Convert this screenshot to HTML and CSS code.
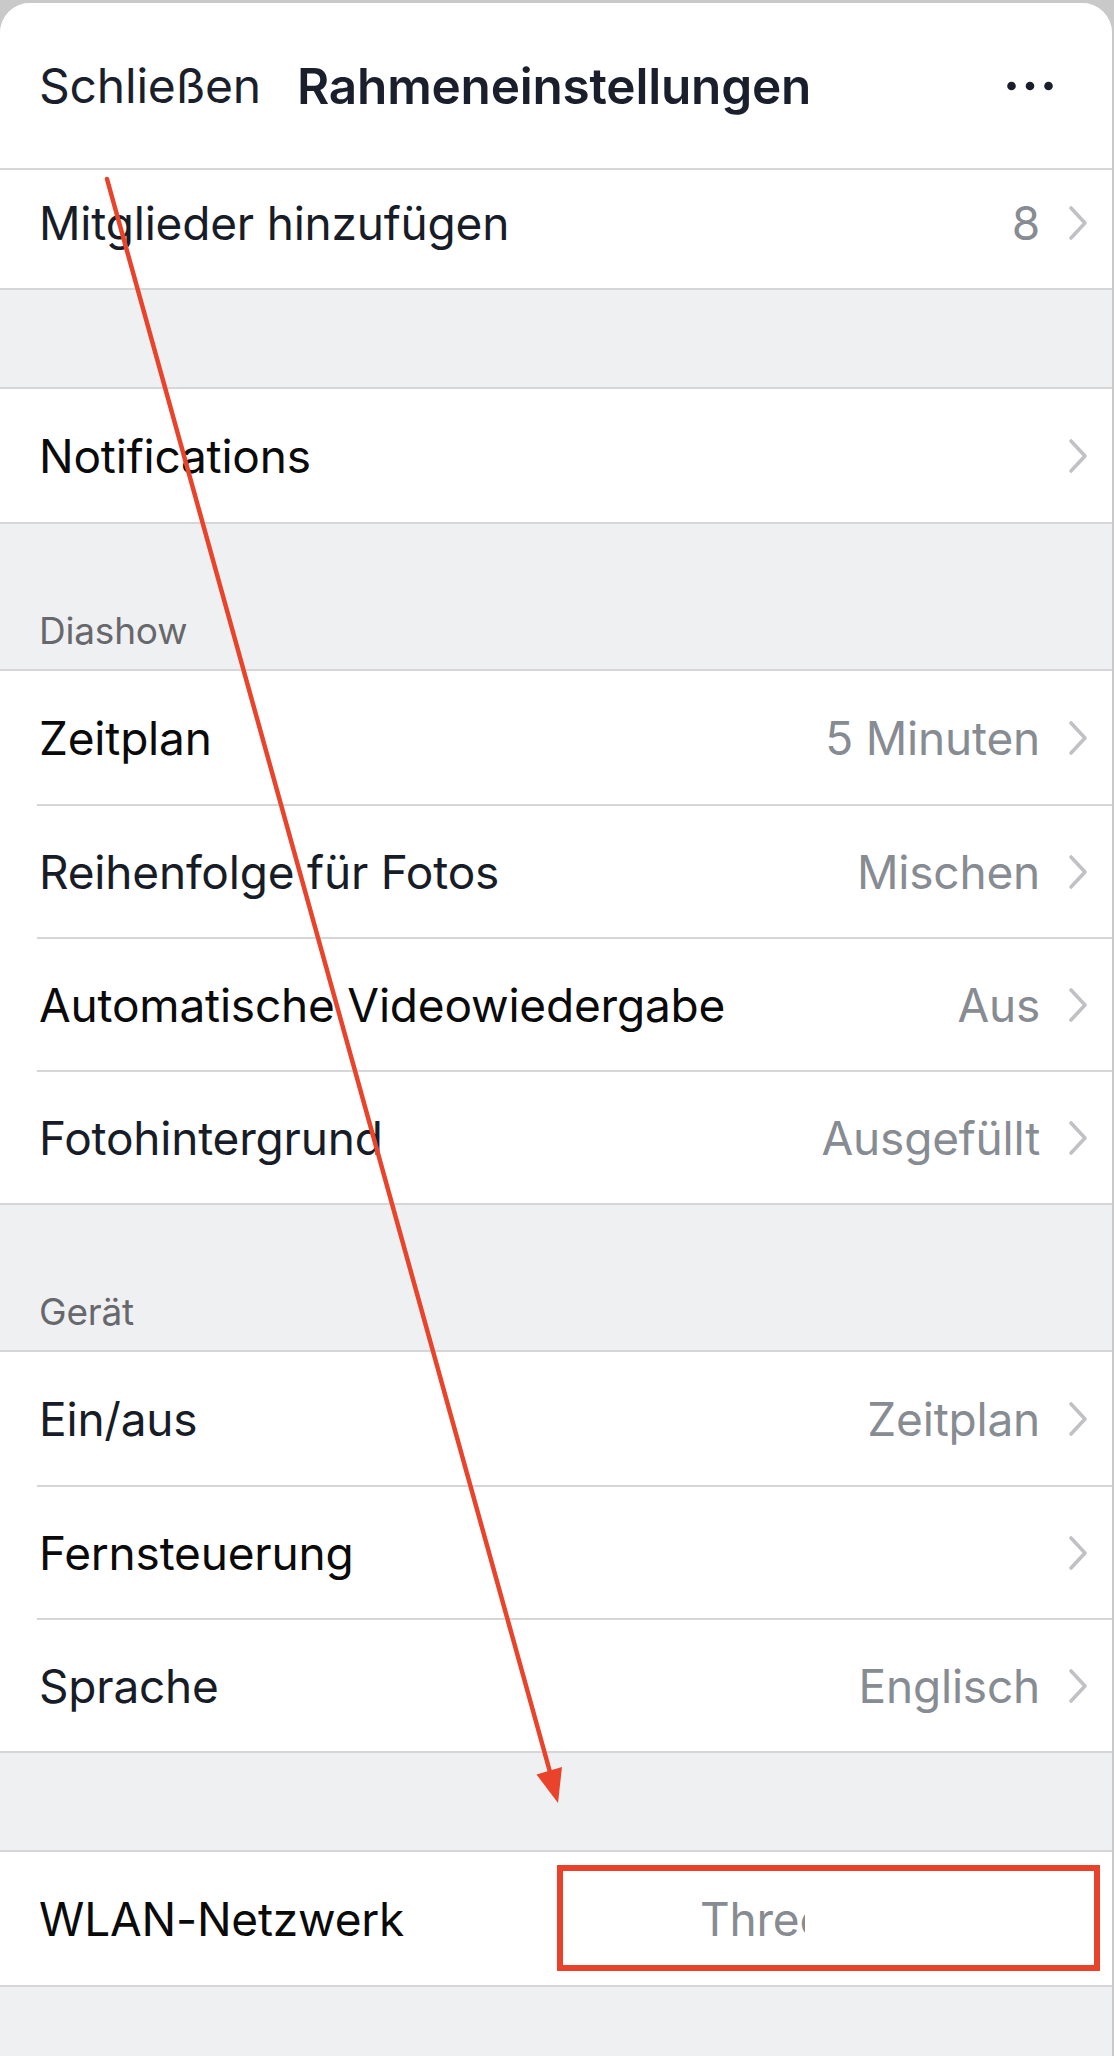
FILE: index.html
```html
<!DOCTYPE html>
<html lang="de">
<head>
<meta charset="utf-8">
<title>Rahmeneinstellungen</title>
<link rel="stylesheet" href="styles.css">
</head>
<body>
<div class="screen">
  <div class="sheet">
    <header class="navbar">
      <span class="nav-close">Schließen</span>
      <span class="nav-title">Rahmeneinstellungen</span>
      <span class="nav-more">
        <svg width="46" height="10" viewBox="0 0 46 10"><circle cx="4.5" cy="5" r="4.3"/><circle cx="23" cy="5" r="4.3"/><circle cx="41.5" cy="5" r="4.3"/></svg>
      </span>
    </header>

    <div class="group group-first">
      <div class="cell cell-cut">
        <span class="label">Mitglieder hinzufügen</span>
        <span class="value">8</span>
        <svg class="chev" width="20" height="36" viewBox="0 0 20 36"><path d="M3 3 L17 18 L3 33"/></svg>
      </div>
    </div>

    <div class="gap"></div>

    <div class="group">
      <div class="cell">
        <span class="label black">Notifications</span>
        <svg class="chev" width="20" height="36" viewBox="0 0 20 36"><path d="M3 3 L17 18 L3 33"/></svg>
      </div>
    </div>

    <div class="gap gap-title"><span>Diashow</span></div>

    <div class="group">
      <div class="cell">
        <span class="label black">Zeitplan</span>
        <span class="value">5 Minuten</span>
        <svg class="chev" width="20" height="36" viewBox="0 0 20 36"><path d="M3 3 L17 18 L3 33"/></svg>
      </div>
      <div class="cell">
        <span class="label">Reihenfolge für Fotos</span>
        <span class="value">Mischen</span>
        <svg class="chev" width="20" height="36" viewBox="0 0 20 36"><path d="M3 3 L17 18 L3 33"/></svg>
      </div>
      <div class="cell">
        <span class="label black">Automatische Videowiedergabe</span>
        <span class="value">Aus</span>
        <svg class="chev" width="20" height="36" viewBox="0 0 20 36"><path d="M3 3 L17 18 L3 33"/></svg>
      </div>
      <div class="cell">
        <span class="label">Fotohintergrund</span>
        <span class="value">Ausgefüllt</span>
        <svg class="chev" width="20" height="36" viewBox="0 0 20 36"><path d="M3 3 L17 18 L3 33"/></svg>
      </div>
    </div>

    <div class="gap gap-title"><span>Gerät</span></div>

    <div class="group">
      <div class="cell">
        <span class="label">Ein/aus</span>
        <span class="value">Zeitplan</span>
        <svg class="chev" width="20" height="36" viewBox="0 0 20 36"><path d="M3 3 L17 18 L3 33"/></svg>
      </div>
      <div class="cell">
        <span class="label black">Fernsteuerung</span>
        <svg class="chev" width="20" height="36" viewBox="0 0 20 36"><path d="M3 3 L17 18 L3 33"/></svg>
      </div>
      <div class="cell">
        <span class="label">Sprache</span>
        <span class="value">Englisch</span>
        <svg class="chev" width="20" height="36" viewBox="0 0 20 36"><path d="M3 3 L17 18 L3 33"/></svg>
      </div>
    </div>

    <div class="gap"></div>

    <div class="group">
      <div class="cell">
        <span class="label black">WLAN-Netzwerk</span>
        <span class="value value-clip">Three</span>
      </div>
    </div>

    <div class="gap-bottom"></div>
  </div>

  <svg class="annot-arrow" width="1114" height="2056" viewBox="0 0 1114 2056">
    <line x1="107" y1="179" x2="550" y2="1772" stroke="#e9442b" stroke-width="4.5" stroke-linecap="round"/>
    <polygon points="558,1803 562,1767 536.5,1774.5" fill="#e9442b"/>
  </svg>
  <div class="annot-box"></div>
</div>
</body>
</html>
```

FILE: styles.css
```css
* { box-sizing: border-box; }

html, body {
  margin: 0;
  padding: 0;
}

body {
  width: 1114px;
  background: #c9c9c9;
  font-family: Inter, "Noto Sans", "Liberation Sans", sans-serif;
  -webkit-font-smoothing: antialiased;
}

.screen {
  position: relative;
  width: 1114px;
  height: 2056px;
  padding-top: 3px;
  background: #c9c9c9;
  overflow: hidden;
}

.sheet {
  width: 1112px;
  height: 2053px;
  background: #eff0f2;
  border-radius: 30px 30px 0 0;
  overflow: hidden;
}

.navbar {
  height: 167px;
  background: #ffffff;
  border-bottom: 2px solid #d6d6d9;
  display: flex;
  align-items: center;
  padding: 0 59px 0 39px;
  color: #1a1f2b;
  letter-spacing: -0.2px;
}

.nav-close {
  font-size: 48px;
  font-weight: 400;
}

.nav-title {
  margin-left: 36px;
  font-size: 49.5px;
  font-weight: 600;
}

.nav-more {
  margin-left: auto;
  display: flex;
  align-items: center;
  fill: #1a1f2b;
}

.group {
  background: #ffffff;
  border-top: 2px solid #d6d6d9;
  border-bottom: 2px solid #d6d6d9;
}

.group-first {
  border-top: none;
}

.cell {
  height: 133px;
  margin-left: 37px;
  padding: 0 24px 0 2px;
  display: flex;
  align-items: center;
  font-size: 46px;
  letter-spacing: -0.2px;
}

.cell + .cell {
  border-top: 2px solid #d6d6d9;
}

.cell-cut {
  height: 118px;
  padding-bottom: 12px;
}

.label {
  color: #171c27;
  white-space: nowrap;
}

.label.black {
  color: #0a0a0a;
}

.value {
  margin-left: auto;
  color: #878b92;
  white-space: nowrap;
}

.chev {
  margin-left: 28px;
  flex: none;
}

.label + .chev {
  margin-left: auto;
}

.chev path {
  fill: none;
  stroke: #bfc1c5;
  stroke-width: 3.6;
  stroke-linecap: round;
  stroke-linejoin: round;
}

.value-clip {
  width: 105px;
  overflow: hidden;
  margin-right: 283px;
}

.gap {
  height: 97px;
}

.gap-title {
  height: 145px;
  display: flex;
  align-items: flex-end;
  padding: 0 0 16px 39px;
  color: #67686c;
  font-size: 37px;
  letter-spacing: -0.2px;
}

.gap-bottom {
  height: 80px;
}

.annot-arrow {
  position: absolute;
  left: 0;
  top: 0;
  pointer-events: none;
}

.annot-box {
  position: absolute;
  left: 557px;
  top: 1865px;
  width: 543px;
  height: 106px;
  border: 6px solid #e8432a;
}
```
